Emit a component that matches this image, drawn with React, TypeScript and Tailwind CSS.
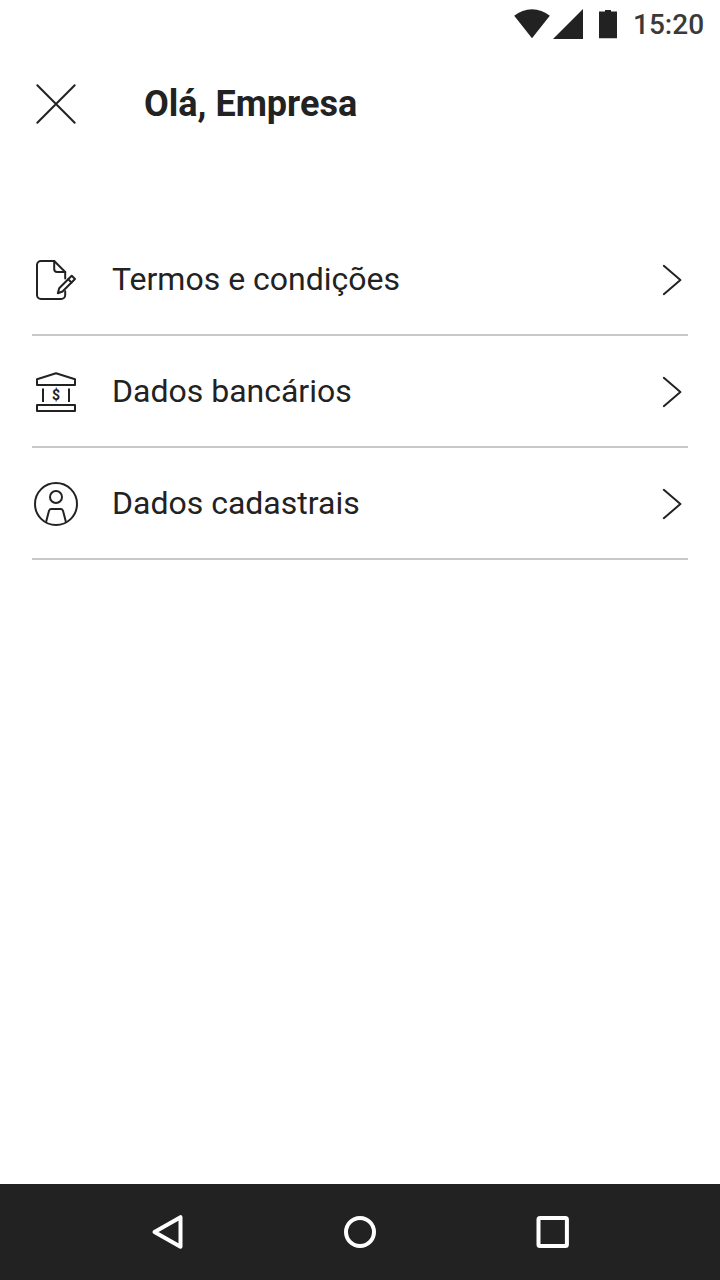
import type { ReactNode } from 'react';

function StatusBar() {
  return (
    <div className="flex h-12 items-center justify-end pr-4 text-[#222222]">
      <svg width="104" height="48" viewBox="0 0 104 48" fill="currentColor">
        <path d="M0.2 15.7C5.5 11.5 11.5 9.3 18 9.3S30.5 11.5 35.8 15.7L18 38.2Z" />
        <path d="M39 39L69 9V39Z" />
        <path d="M91 10H97V11.5H103V38.3H85V11.5H91Z" />
      </svg>
      <span className="ml-[15px] w-[71px] pt-0.5 whitespace-nowrap text-[28px] leading-none font-medium text-[#3a3a3a]">15:20</span>
    </div>
  );
}

function CloseIcon() {
  return (
    <svg width="48" height="48" viewBox="0 0 48 48" fill="none" stroke="currentColor" strokeWidth="2" strokeLinecap="round">
      <path d="M5.3 5.3L42.7 42.7M42.7 5.3L5.3 42.7" />
    </svg>
  );
}

function TermsIcon() {
  return (
    <svg width="48" height="48" viewBox="0 0 48 48" fill="none" stroke="currentColor" strokeWidth="2" strokeLinejoin="round" strokeLinecap="round">
      <path d="M33.2 22.5V16L22.2 5H9a4 4 0 0 0-4 4V39a4 4 0 0 0 4 4H29.2a4 4 0 0 0 4-4V35.2" />
      <path d="M22.2 5V13a3 3 0 0 0 3 3H33.2" />
      <path d="M25.8 37.2L27.2 32.2L39.7 19.7L43 23L30.5 35.5Z" />
      <path d="M36.2 23.2L39.5 26.5" />
    </svg>
  );
}

function BankIcon() {
  return (
    <svg width="48" height="48" viewBox="0 0 48 48" fill="none" stroke="currentColor" strokeWidth="2" strokeLinejoin="round">
      <path d="M5 11.2L24 5.3L43 11.2V17H5Z" />
      <path d="M11 20.5V34M37 20.5V34" />
      <path d="M5 37H43V43H5Z" />
      <text x="24" y="32" textAnchor="middle" fill="currentColor" stroke="none" className="text-[14px] font-bold">$</text>
    </svg>
  );
}

function UserIcon() {
  return (
    <svg width="48" height="48" viewBox="0 0 48 48" fill="none" stroke="currentColor" strokeWidth="2">
      <circle cx="24" cy="24" r="21" />
      <circle cx="24" cy="17" r="6" />
      <path d="M14 42.2L17 30.8Q17.5 29 19.3 29H28.7Q30.5 29 31 30.8L34 42.2" />
    </svg>
  );
}

function ChevronIcon() {
  return (
    <svg width="32" height="32" viewBox="0 0 32 32" fill="none" stroke="currentColor" strokeWidth="2" strokeLinecap="round" strokeLinejoin="round">
      <path d="M7.8 1.8L24.4 16L7.8 30.2" />
    </svg>
  );
}

function MenuItem({ icon, label }: { icon: ReactNode; label: string }) {
  return (
    <button className="flex h-28 w-full items-center border-b-2 border-[#c8c8c8] pt-0.5 text-left">
      {icon}
      <span className="ml-8 flex-1 pb-0.5 text-[32px] leading-10">{label}</span>
      <ChevronIcon />
    </button>
  );
}

function NavBar() {
  return (
    <nav className="flex h-24 items-center justify-between bg-[#222222] px-36 text-white">
      <svg width="48" height="48" viewBox="0 0 48 48" fill="none" stroke="currentColor" strokeWidth="4" strokeLinejoin="round">
        <path d="M10.5 24L36.5 9.2V38.8Z" />
      </svg>
      <svg width="48" height="48" viewBox="0 0 48 48" fill="none" stroke="currentColor" strokeWidth="4">
        <circle cx="24" cy="24" r="14" />
      </svg>
      <svg width="48" height="48" viewBox="0 0 48 48" fill="none" stroke="currentColor" strokeWidth="4">
        <rect x="10.5" y="10" width="28.4" height="28" rx="1.5" />
      </svg>
    </nav>
  );
}

export default function App() {
  return (
    <div className="flex h-screen flex-col bg-white font-['Roboto',sans-serif] text-[#222222]">
      <StatusBar />

      <header className="flex h-28 items-center px-8">
        <button>
          <CloseIcon />
        </button>
        <h1 className="ml-16 text-[36px] leading-none font-bold">Olá, Empresa</h1>
      </header>

      <main className="flex-1 px-8 pt-16">
        <MenuItem icon={<TermsIcon />} label="Termos e condições" />
        <MenuItem icon={<BankIcon />} label="Dados bancários" />
        <MenuItem icon={<UserIcon />} label="Dados cadastrais" />
      </main>

      <NavBar />
    </div>
  );
}
